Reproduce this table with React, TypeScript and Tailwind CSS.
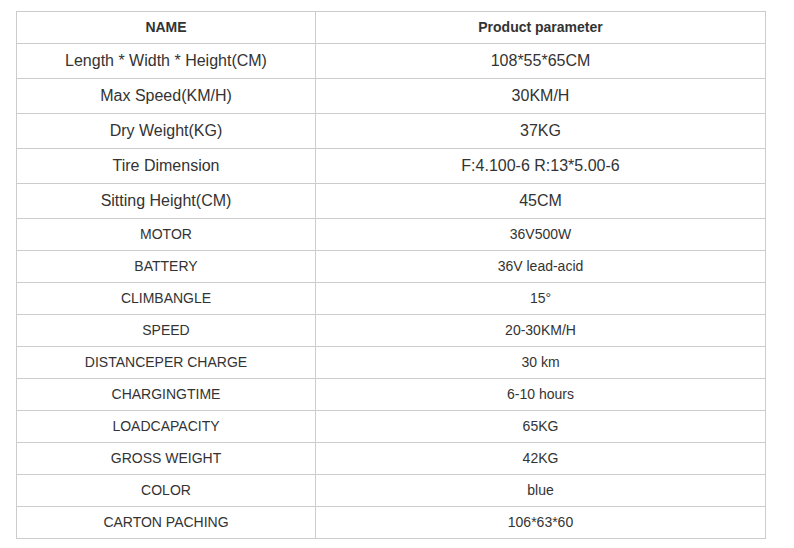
const bigRows: [string, string][] = [
  ['Length * Width * Height(CM)', '108*55*65CM'],
  ['Max Speed(KM/H)', '30KM/H'],
  ['Dry Weight(KG)', '37KG'],
  ['Tire Dimension', 'F:4.100-6 R:13*5.00-6'],
  ['Sitting Height(CM)', '45CM'],
];

const smallRows: [string, string][] = [
  ['MOTOR', '36V500W'],
  ['BATTERY', '36V lead-acid'],
  ['CLIMBANGLE', '15°'],
  ['SPEED', '20-30KM/H'],
  ['DISTANCEPER CHARGE', '30 km'],
  ['CHARGINGTIME', '6-10 hours'],
  ['LOADCAPACITY', '65KG'],
  ['GROSS WEIGHT', '42KG'],
  ['COLOR', 'blue'],
  ['CARTON PACHING', '106*63*60'],
];

const cell = 'border border-[#cccccc] text-center align-middle p-0';

export default function App() {
  return (
    <div className="min-h-[548px] bg-white pt-[11px] pl-[16px] font-['Liberation_Sans',Arial,sans-serif] text-[#333333]">
      <table className="w-[750px] table-fixed border-collapse">
        <colgroup>
          <col className="w-[299px]" />
          <col />
        </colgroup>
        <thead>
          <tr className="h-[32px]">
            <th className={`${cell} text-[14px] font-bold`}>NAME</th>
            <th className={`${cell} text-[14px] font-bold`}>Product parameter</th>
          </tr>
        </thead>
        <tbody>
          {bigRows.map(([name, value]) => (
            <tr key={name} className="h-[35px]">
              <td className={`${cell} text-[16px]`}>{name}</td>
              <td className={`${cell} text-[16px]`}>{value}</td>
            </tr>
          ))}
          {smallRows.map(([name, value]) => (
            <tr key={name} className="h-[32px]">
              <td className={`${cell} text-[14px]`}>{name}</td>
              <td className={`${cell} text-[14px]`}>{value}</td>
            </tr>
          ))}
        </tbody>
      </table>
    </div>
  );
}
